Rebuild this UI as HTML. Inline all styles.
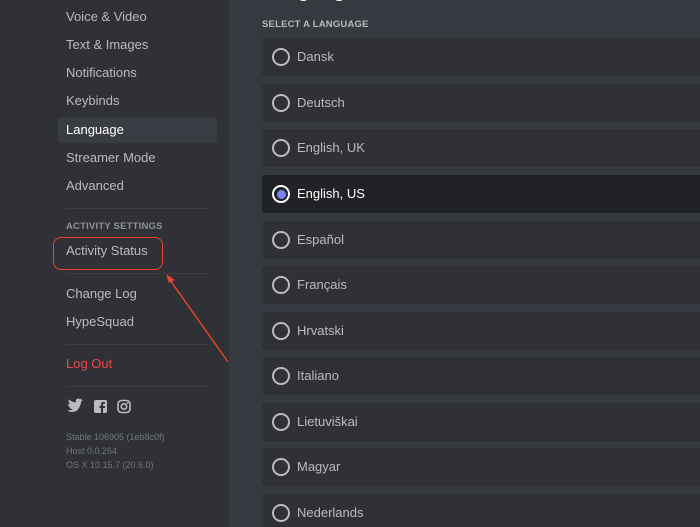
<html style="overflow:hidden;background:#36393f"><head><style>
body{margin:0;width:700px;height:527px;overflow:hidden;background:#36393f;font-family:"Liberation Sans",sans-serif;position:relative}
.sb{position:absolute;left:0;top:0;width:229px;height:527px;background:#2f3136}
.it{position:absolute;left:66px;font-size:13px;color:#b9bbbe;line-height:16px}
.sep{position:absolute;left:66px;width:142px;height:1px;background:#3b3d42}
.hd{position:absolute;font-size:9.5px;font-weight:bold;color:#8e9297;letter-spacing:.2px}
.row{position:absolute;left:262px;width:450px;height:38px;background:#2f3136;border-radius:3px}
.row span{position:absolute;left:35px;top:11px;font-size:13px;color:#b9bbbe}
.row i{position:absolute;left:10px;top:10px;width:14px;height:14px;border:2px solid #b9bbbe;border-radius:50%}
.ver{position:absolute;left:66px;font-size:9px;color:#72767d}
</style></head><body>
<div class="sb"></div>
<div style="position:absolute;left:262px;top:-20px;font-size:20px;font-weight:bold;color:#fff">Language</div>
<div class="it" style="top:9px">Voice &amp; Video</div>
<div class="it" style="top:37px">Text &amp; Images</div>
<div class="it" style="top:65px">Notifications</div>
<div class="it" style="top:93px">Keybinds</div>
<div style="position:absolute;left:58px;top:117px;width:159px;height:26px;background:#393c43;border-radius:3px"></div>
<div class="it" style="top:122px;color:#fff">Language</div>
<div class="it" style="top:150px">Streamer Mode</div>
<div class="it" style="top:178px">Advanced</div>
<div class="sep" style="top:208px"></div>
<div class="hd" style="left:66px;top:221px">ACTIVITY SETTINGS</div>
<div class="it" style="top:243px">Activity Status</div>
<div style="position:absolute;left:53px;top:237px;width:108px;height:31px;border:1.5px solid #e8432c;border-radius:8px"></div>
<div class="sep" style="top:273px"></div>
<div class="it" style="top:286px">Change Log</div>
<div class="it" style="top:314px">HypeSquad</div>
<div class="sep" style="top:344px"></div>
<div class="it" style="top:356px;color:#f04747">Log Out</div>
<div class="sep" style="top:386px"></div>
<svg style="position:absolute;left:66px;top:398px" width="70" height="18">
<path d="M2 13c4 2 9 1 11-3 1-2 2-4 2-6l2-2-2 .5 1-2-2 .8c-2-2-5 0-4 3-3 0-5-1-7-3-1 2 0 4 1 5H2c0 1 1 3 3 3H3c1 1 2 2 4 2-2 1-3 1-5 1z" fill="#b9bbbe"/>
<rect x="28" y="2" width="13" height="13" rx="2" fill="#b9bbbe"/><path d="M37 15v-5h2v-2h-2V6.5c0-.5.3-.8.8-.8H39V4h-1.5c-2 0-2.5 1-2.5 2.5V8h-1.5v2H35v5z" fill="#2f3136"/>
<rect x="52" y="2.5" width="12" height="12" rx="3.5" fill="none" stroke="#b9bbbe" stroke-width="1.6"/><circle cx="58" cy="8.5" r="2.7" fill="none" stroke="#b9bbbe" stroke-width="1.6"/><circle cx="61.5" cy="5" r=".9" fill="#b9bbbe"/>
</svg>
<div class="ver" style="top:432px">Stable 106905 (1eb8c0f)</div>
<div class="ver" style="top:446px">Host 0.0.264</div>
<div class="ver" style="top:460px">OS X 10.15.7 (20.6.0)</div>
<svg style="position:absolute;left:0;top:0" width="700" height="527"><line x1="228" y1="362" x2="170" y2="280" stroke="#e8432c" stroke-width="1.5"/><path d="M166 274l9 6-6 3z" fill="#e8432c"/></svg>
<div class="hd" style="left:262px;top:19px;color:#b9bbbe">SELECT A LANGUAGE</div>
<div class="row" style="top:38px"><i></i><span>Dansk</span></div>
<div class="row" style="top:84px"><i></i><span>Deutsch</span></div>
<div class="row" style="top:129px"><i></i><span>English, UK</span></div>
<div class="row" style="top:175px;background:#202225"><i style="border-color:#fff;background:#202225"><b style="position:absolute;left:2.5px;top:2.5px;width:9px;height:9px;border-radius:50%;background:#7983f5"></b></i><span style="color:#fff">English, US</span></div>
<div class="row" style="top:221px"><i></i><span>Español</span></div>
<div class="row" style="top:266px"><i></i><span>Français</span></div>
<div class="row" style="top:312px"><i></i><span>Hrvatski</span></div>
<div class="row" style="top:357px"><i></i><span>Italiano</span></div>
<div class="row" style="top:403px"><i></i><span>Lietuviškai</span></div>
<div class="row" style="top:448px"><i></i><span>Magyar</span></div>
<div class="row" style="top:494px"><i></i><span>Nederlands</span></div>
</body></html>
